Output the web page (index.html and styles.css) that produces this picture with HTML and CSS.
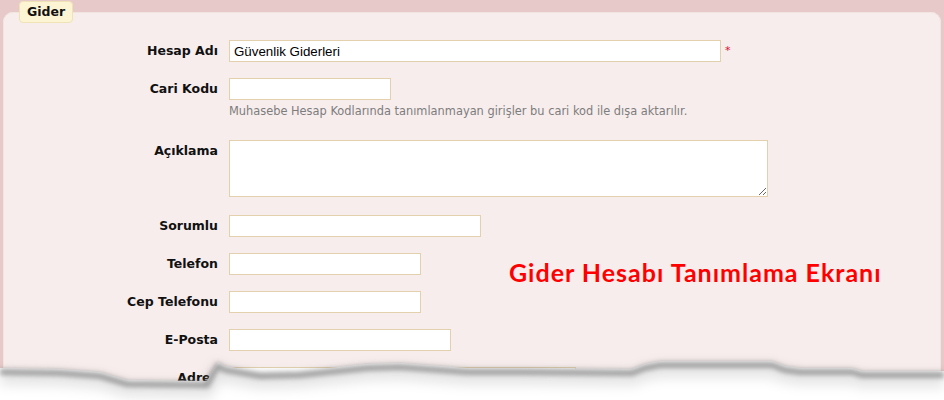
FILE: index.html
```html
<!DOCTYPE html>
<html lang="tr">
<head>
<meta charset="utf-8">
<title>Gider</title>
<link rel="stylesheet" href="styles.css">
</head>
<body>
<div class="page">
  <fieldset class="box">
    <legend class="legend">Gider</legend>

    <div class="row">
      <label class="lbl">Hesap Adı</label>
      <div class="field">
        <input class="inp w-hesap" type="text" value="Güvenlik Giderleri"><span class="req">*</span>
      </div>
    </div>

    <div class="row row-help">
      <label class="lbl">Cari Kodu</label>
      <div class="field field-col">
        <input class="inp w-cari" type="text">
        <div class="help">Muhasebe Hesap Kodlarında tanımlanmayan girişler bu cari kod ile dışa aktarılır.</div>
      </div>
    </div>

    <div class="row row-area">
      <label class="lbl">Açıklama</label>
      <div class="field">
        <textarea class="area"></textarea>
      </div>
    </div>

    <div class="row">
      <label class="lbl">Sorumlu</label>
      <div class="field"><input class="inp w-sorumlu" type="text"></div>
    </div>

    <div class="row">
      <label class="lbl">Telefon</label>
      <div class="field"><input class="inp w-tel" type="text"></div>
    </div>

    <div class="row">
      <label class="lbl">Cep Telefonu</label>
      <div class="field"><input class="inp w-tel" type="text"></div>
    </div>

    <div class="row">
      <label class="lbl">E-Posta</label>
      <div class="field"><input class="inp w-posta" type="text"></div>
    </div>

    <div class="row">
      <label class="lbl">Adres</label>
      <div class="field"><input class="inp w-adres" type="text"></div>
    </div>
  </fieldset>

  <div class="title">Gider Hesabı Tanımlama Ekranı</div>

  <svg class="torn" width="944" height="60" viewBox="0 0 944 60" aria-hidden="true">
    <defs>
      <filter id="b1" x="-5%" y="-100%" width="110%" height="300%"><feGaussianBlur stdDeviation="2.6"/></filter>
      <filter id="b2" x="-5%" y="-100%" width="110%" height="300%"><feGaussianBlur stdDeviation="6"/></filter>
    </defs>
    <polygon fill="#ffffff" points="0,28 60,29 100,32 127,40 207,41 213,30 218,22 225,26 260,32 300,31 367,24 400,23 467,28 520,28 632,29 645,24 660,21 772,21 785,26 800,28 852,28 862,31 944,31 944,60 0,60"/>
    <polyline fill="none" stroke="#000" stroke-opacity="0.1" stroke-width="14" filter="url(#b2)" transform="translate(0,10)" points="0,28 60,29 100,32 127,40 207,41 213,30 218,22 225,26 260,32 300,31 367,24 400,23 467,28 520,28 632,29 645,24 660,21 772,21 785,26 800,28 852,28 862,31 944,31"/>
    <polyline fill="none" stroke="#7a7a7a" stroke-opacity="0.7" stroke-width="6" filter="url(#b1)" transform="translate(0,4)" points="0,28 60,29 100,32 127,40 207,41 213,30 218,22 225,26 260,32 300,31 367,24 400,23 467,28 520,28 632,29 645,24 660,21 772,21 785,26 800,28 852,28 862,31 944,31"/>
  </svg>
</div>
</body>
</html>
```
FILE: styles.css
```css
html, body {
  margin: 0;
  padding: 0;
}
body {
  background: #e7c9c9;
  width: 944px;
  height: 400px;
  overflow: hidden;
  font-family: "DejaVu Sans", Verdana, sans-serif;
}
.page {
  position: relative;
  padding: 1px 3px 0 3px;
  height: 399px;
}
.box {
  margin: 0;
  padding: 17px 0 0 0;
  border: 1px solid #f2e5e0;
  border-radius: 10px 10px 0 0;
  background: #f7eded;
  min-width: 0;
  height: 399px;
  overflow: hidden;
  box-sizing: border-box;
}
.legend {
  margin-left: 15px;
  padding: 0 7px;
  height: 22px;
  box-sizing: border-box;
  line-height: 20px;
  background: #fdf4d4;
  border: 1px solid #efe2b6;
  border-radius: 4px;
  font-weight: bold;
  font-size: 12.5px;
  color: #111;
}
.row {
  display: grid;
  grid-template-columns: 214px 1fr;
  column-gap: 11px;
  margin-bottom: 16px;
}
.row-help {
  margin-bottom: 16px;
}
.row-area {
  margin-bottom: 18px;
}
.lbl {
  text-align: right;
  font-weight: bold;
  font-size: 12.5px;
  line-height: 22px;
  color: #111;
}
.field {
  display: flex;
  align-items: center;
}
.field-col {
  flex-direction: column;
  align-items: flex-start;
}
.inp {
  display: block;
  box-sizing: border-box;
  height: 22px;
  margin: 0;
  padding: 0 4px;
  border: 1px solid #e3d1ae;
  background: #fff;
  font-family: "Liberation Sans", Arial, sans-serif;
  font-size: 13.333px;
  color: #000;
  outline: none;
}
.w-hesap { width: 492px; }
.w-cari { width: 162px; }
.w-sorumlu { width: 252px; }
.w-tel { width: 192px; }
.w-posta { width: 222px; }
.w-adres { width: 347px; }
.req {
  margin-left: 4px;
  color: #e0102a;
  font-size: 11px;
  line-height: 11px;
  align-self: flex-start;
  margin-top: 5px;
}
.help {
  margin-top: 4px;
  margin-bottom: 6px;
  line-height: 14px;
  font-size: 11.4px;
  color: #7d7d7d;
}
.area {
  display: block;
  box-sizing: border-box;
  width: 539px;
  height: 57px;
  margin: 0;
  padding: 2px 4px;
  border: 1px solid #e3d1ae;
  background: #fff;
  font-family: "Liberation Sans", Arial, sans-serif;
  font-size: 13.333px;
}
.title {
  position: absolute;
  left: 509px;
  top: 260px;
  font-family: Lato, "Open Sans", sans-serif;
  font-weight: bold;
  font-size: 25px;
  line-height: 25px;
  letter-spacing: 1px;
  color: #ff0000;
  white-space: nowrap;
}
.torn {
  position: absolute;
  left: 0;
  top: 340px;
  display: block;
}
```
